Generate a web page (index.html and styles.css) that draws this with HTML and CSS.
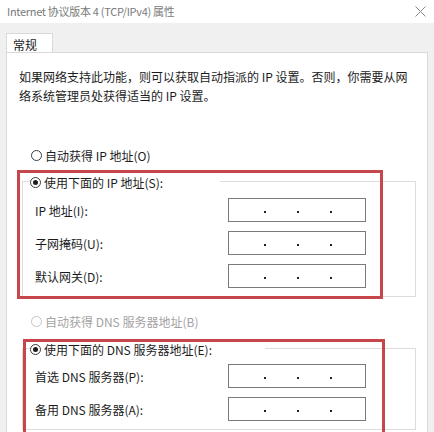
FILE: index.html
```html
<!DOCTYPE html>
<html lang="zh-CN">

<head>
  <meta charset="UTF-8">
  <meta name="viewport" content="width=device-width, initial-scale=1.0">
  <title>Internet 协议版本 4 (TCP/IPv4) 属性</title>
  <link rel="stylesheet" href="styles.css">
</head>

<body>
  <div class="titlebar">
    <span class="title">Internet 协议版本 4 (TCP/IPv4) 属性</span>
    <svg class="close" width="11" height="11" viewBox="0 0 11 11">
      <path d="M0.5 0.5 L10.5 10.5 M10.5 0.5 L0.5 10.5" stroke="#8a8a8a" stroke-width="1" fill="none" />
    </svg>
  </div>

  <div class="tabs">
    <div class="tab">常规</div>
  </div>

  <div class="panel">
    <p class="intro">如果网络支持此功能，则可以获取自动指派的 IP 设置。否则，你需要从网络系统管理员处获得适当的 IP 设置。</p>

    <div class="radio-row first">
      <span class="radio"></span>
      <span>自动获得 IP 地址(O)</span>
    </div>

    <div class="group">
      <div class="legend legend-ip">
        <span class="radio checked"></span>
        <span>使用下面的 IP 地址(S):</span>
      </div>
      <div class="field">
        <label>IP 地址(I):</label>
        <div class="ip-box"><i></i><i></i><i></i></div>
      </div>
      <div class="field">
        <label>子网掩码(U):</label>
        <div class="ip-box"><i></i><i></i><i></i></div>
      </div>
      <div class="field">
        <label>默认网关(D):</label>
        <div class="ip-box"><i></i><i></i><i></i></div>
      </div>
    </div>

    <div class="radio-row disabled">
      <span class="radio"></span>
      <span>自动获得 DNS 服务器地址(B)</span>
    </div>

    <div class="group group-dns">
      <div class="legend legend-dns">
        <span class="radio checked"></span>
        <span>使用下面的 DNS 服务器地址(E):</span>
      </div>
      <div class="field">
        <label>首选 DNS 服务器(P):</label>
        <div class="ip-box"><i></i><i></i><i></i></div>
      </div>
      <div class="field">
        <label>备用 DNS 服务器(A):</label>
        <div class="ip-box"><i></i><i></i><i></i></div>
      </div>
    </div>

    <!-- red annotation frames drawn over the dialog -->
    <div class="mark mark-ip"></div>
    <div class="mark mark-dns"></div>
  </div>
</body>

</html>
```

FILE: styles.css
```css
body {
  margin: 0;
  width: 434px;
  height: 432px;
  overflow: hidden;
  background: #f0f0f0;
  font-family: "Noto Sans CJK SC", "Microsoft YaHei", sans-serif;
  font-size: 12px;
  color: #1c1c1c;
}

.titlebar {
  height: 23px;
  background: #fff;
  display: flex;
  align-items: center;
  justify-content: space-between;
  padding: 0 8px 0 7px;
}

.title {
  color: #7a7a7a;
  font-size: 11px;
  letter-spacing: -0.3px;
  line-height: 23px;
}

.tabs {
  display: flex;
  padding: 10px 0 0 6px;
}

.tab {
  width: 47px;
  height: 20px;
  background: #fff;
  border: 1px solid #d9d9d9;
  border-bottom: none;
  padding-left: 6px;
  box-sizing: border-box;
  line-height: 22px;
  margin-bottom: -1px;
  position: relative;
}

.panel {
  position: relative;
  overflow: hidden;
  margin: 0 6px;
  height: 382px;
  background: #fff;
  border: 1px solid #d9d9d9;
  box-sizing: border-box;
  padding-top: 14px;
}

.intro {
  margin: 0;
  padding: 0 14px 0 12px;
  line-height: 19px;
}

.radio-row {
  display: flex;
  align-items: center;
  gap: 3px;
  height: 20px;
  padding-left: 24px;
}

.radio-row.first {
  margin-top: 40px;
}

.radio-row.disabled {
  margin-top: 14px;
  color: #a3a3a3;
}

.radio {
  width: 11px;
  height: 11px;
  border: 1px solid #3c3c3c;
  border-radius: 50%;
  box-sizing: border-box;
  background: #fff;
  display: flex;
  align-items: center;
  justify-content: center;
  flex-shrink: 0;
}

.radio.checked::after {
  content: "";
  width: 5px;
  height: 5px;
  border-radius: 50%;
  background: #1c1c1c;
}

.disabled .radio {
  border-color: #c4c4c4;
}

.group {
  margin: 16px 0 0 15px;
  width: 394px;
  box-sizing: border-box;
  border: 1px solid #dcdcdc;
  padding-bottom: 8px;
}

.group-dns {
  margin-top: 17px;
}

.legend {
  display: flex;
  align-items: center;
  gap: 3px;
  height: 20px;
  margin: -10px 0 6px 7px;
  background: #fff;
}

.legend-ip {
  width: 190px;
}

.legend-dns {
  width: 235px;
  margin-bottom: 5px;
}

.field {
  display: grid;
  grid-template-columns: 193px 138px;
  align-items: center;
  height: 24px;
  padding-left: 12px;
}

.field + .field {
  margin-top: 9px;
}

.ip-box {
  height: 24px;
  box-sizing: border-box;
  border: 1px solid #7a7a7a;
  display: flex;
  align-items: center;
  gap: 31px;
  padding: 3px 0 0 35px;
}

.ip-box i {
  width: 2px;
  height: 2px;
  background: #222;
}

.mark {
  position: absolute;
  border: 3px solid #c6464c;
  box-sizing: border-box;
}

.mark-ip {
  left: 10px;
  top: 117px;
  width: 366px;
  height: 129px;
}

.mark-dns {
  left: 16px;
  top: 286px;
  width: 362px;
  height: 120px;
}
```
